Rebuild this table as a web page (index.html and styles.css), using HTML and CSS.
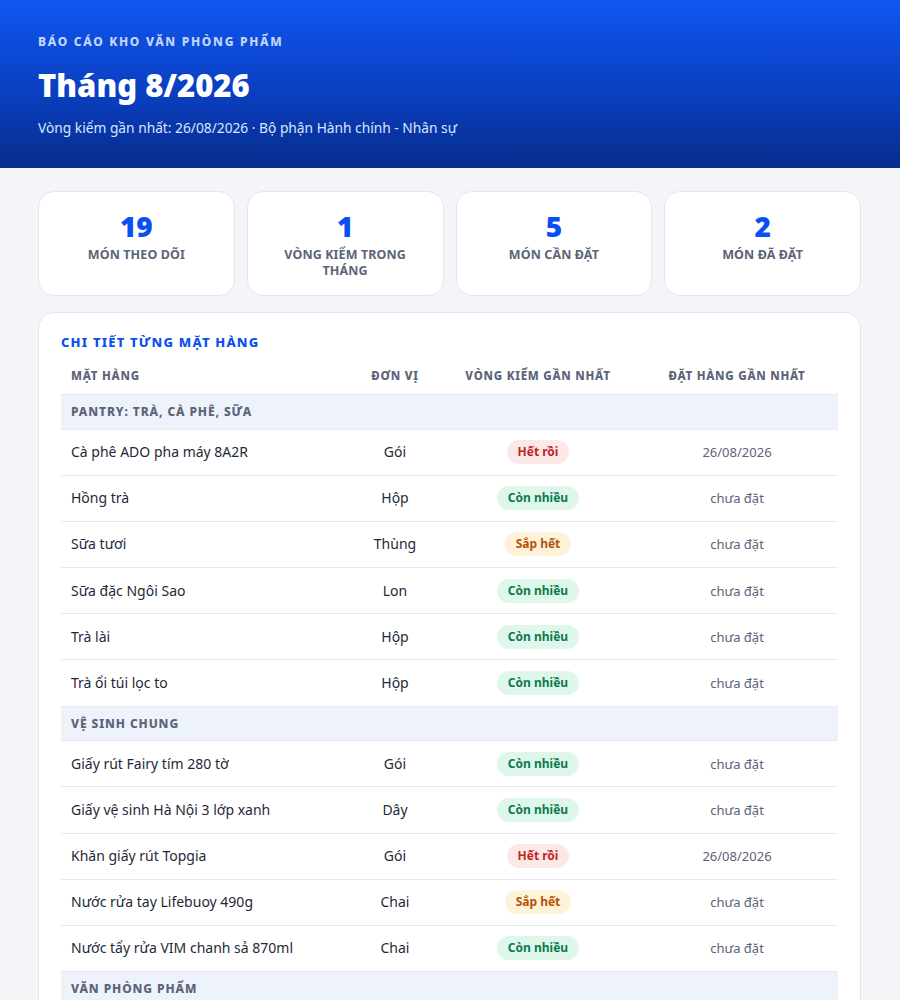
FILE: index.html
```html
<!DOCTYPE html>
<html lang="vi">
<head>
<meta charset="utf-8">
<title>Báo cáo kho văn phòng phẩm</title>
<link rel="stylesheet" href="styles.css">
</head>
<body>
<header class="hero">
  <div class="eyebrow">Báo cáo kho văn phòng phẩm</div>
  <h1 class="title">Tháng 8/2026</h1>
  <p class="subtitle">Vòng kiểm gần nhất: 26/08/2026 · Bộ phận Hành chính - Nhân sự</p>
</header>
<main class="content">
  <section class="stats">
    <div class="stat"><div class="stat-num">19</div><div class="stat-label">Món theo dõi</div></div>
    <div class="stat"><div class="stat-num">1</div><div class="stat-label">Vòng kiểm trong tháng</div></div>
    <div class="stat"><div class="stat-num">5</div><div class="stat-label">Món cần đặt</div></div>
    <div class="stat"><div class="stat-num">2</div><div class="stat-label">Món đã đặt</div></div>
  </section>
  <section class="panel">
    <h2 class="panel-title">Chi tiết từng mặt hàng</h2>
    <table class="items">
      <colgroup>
        <col class="c-name"><col class="c-unit"><col class="c-check"><col class="c-order">
      </colgroup>
      <thead>
        <tr><th class="left">Mặt hàng</th><th>Đơn vị</th><th>Vòng kiểm gần nhất</th><th>Đặt hàng gần nhất</th></tr>
      </thead>
      <tbody>
        <tr class="cat"><td colspan="4">Pantry: Trà, Cà phê, Sữa</td></tr>
        <tr><td class="name">Cà phê ADO pha máy 8A2R</td><td class="unit">Gói</td><td class="st"><span class="badge out">Hết rồi</span></td><td class="date">26/08/2026</td></tr>
        <tr><td class="name">Hồng trà</td><td class="unit">Hộp</td><td class="st"><span class="badge ok">Còn nhiều</span></td><td class="date">chưa đặt</td></tr>
        <tr><td class="name">Sữa tươi</td><td class="unit">Thùng</td><td class="st"><span class="badge low">Sắp hết</span></td><td class="date">chưa đặt</td></tr>
        <tr><td class="name">Sữa đặc Ngôi Sao</td><td class="unit">Lon</td><td class="st"><span class="badge ok">Còn nhiều</span></td><td class="date">chưa đặt</td></tr>
        <tr><td class="name">Trà lài</td><td class="unit">Hộp</td><td class="st"><span class="badge ok">Còn nhiều</span></td><td class="date">chưa đặt</td></tr>
        <tr><td class="name">Trà ổi túi lọc to</td><td class="unit">Hộp</td><td class="st"><span class="badge ok">Còn nhiều</span></td><td class="date">chưa đặt</td></tr>
        <tr class="cat"><td colspan="4">Vệ sinh chung</td></tr>
        <tr><td class="name">Giấy rút Fairy tím 280 tờ</td><td class="unit">Gói</td><td class="st"><span class="badge ok">Còn nhiều</span></td><td class="date">chưa đặt</td></tr>
        <tr><td class="name">Giấy vệ sinh Hà Nội 3 lớp xanh</td><td class="unit">Dây</td><td class="st"><span class="badge ok">Còn nhiều</span></td><td class="date">chưa đặt</td></tr>
        <tr><td class="name">Khăn giấy rút Topgia</td><td class="unit">Gói</td><td class="st"><span class="badge out">Hết rồi</span></td><td class="date">26/08/2026</td></tr>
        <tr><td class="name">Nước rửa tay Lifebuoy 490g</td><td class="unit">Chai</td><td class="st"><span class="badge low">Sắp hết</span></td><td class="date">chưa đặt</td></tr>
        <tr><td class="name">Nước tẩy rửa VIM chanh sả 870ml</td><td class="unit">Chai</td><td class="st"><span class="badge ok">Còn nhiều</span></td><td class="date">chưa đặt</td></tr>
        <tr class="cat"><td colspan="4">Văn phòng phẩm</td></tr>
        <tr><td class="name">Bút bi Thiên Long</td><td class="unit">Hộp</td><td class="st"><span class="badge ok">Còn nhiều</span></td><td class="date">chưa đặt</td></tr>
        <tr><td class="name">Giấy A4 Double A</td><td class="unit">Ram</td><td class="st"><span class="badge low">Sắp hết</span></td><td class="date">chưa đặt</td></tr>
      </tbody>
    </table>
  </section>
</main>
</body>
</html>
```

FILE: styles.css
```css
* { box-sizing: border-box; }
html, body { margin: 0; padding: 0; }
body {
  font-family: "Noto Sans", "Open Sans", "DejaVu Sans", sans-serif;
  background: #f3f5f9;
  color: #1f2937;
}
.hero {
  background: linear-gradient(180deg, #0f57f1 0%, #0a3fc0 55%, #062d8c 100%);
  padding: 34px 38px 30px;
  height: 168px;
}
.eyebrow {
  font-size: 12px;
  line-height: 16px;
  font-weight: 800;
  letter-spacing: 1.7px;
  text-transform: uppercase;
  color: #c4d5ff;
}
.title {
  margin: 15px 0 0;
  font-size: 31px;
  line-height: 40px;
  font-weight: 900;
  color: #ffffff;
}
.subtitle {
  margin: 13px 0 0;
  font-size: 13.75px;
  line-height: 20px;
  color: #dbe6ff;
}
.content {
  padding: 23px 39px 40px 38px;
}
.stats {
  display: grid;
  grid-template-columns: repeat(4, 1fr);
  gap: 12px;
}
.stat {
  background: #fff;
  border: 1px solid #e2e7ef;
  border-radius: 16px;
  padding: 17px 30px 16px;
  text-align: center;
}
.stat-num {
  font-size: 28px;
  line-height: 34px;
  font-weight: 900;
  color: #0a4ff2;
}
.stat-label {
  margin-top: 4px;
  font-size: 12.5px;
  line-height: 16px;
  font-weight: 700;
  text-transform: uppercase;
  letter-spacing: 0.1px;
  color: #5b6478;
}
.panel {
  margin-top: 16px;
  background: #fff;
  border: 1px solid #e2e7ef;
  border-radius: 16px;
  padding: 20px 22px 22px;
}
.panel-title {
  margin: 0 0 6px;
  font-size: 13px;
  line-height: 18px;
  font-weight: 800;
  letter-spacing: 1.2px;
  text-transform: uppercase;
  color: #0a4ff2;
}
.items {
  width: 100%;
  border-collapse: separate;
  border-spacing: 0;
  table-layout: fixed;
}
.c-name { width: 289px; }
.c-unit { width: 90px; }
.c-check { width: 196px; }
.c-order { width: 202px; }
.items th {
  padding: 11px 10px 10px;
  font-size: 11.5px;
  line-height: 16px;
  font-weight: 800;
  letter-spacing: 0.75px;
  text-transform: uppercase;
  color: #5b6478;
  text-align: center;
  border-bottom: 1px solid #e2e7ef;
}
.items th.left { text-align: left; }
.items td {
  padding: 0 10px;
  height: 46.2px;
  font-size: 14px;
  line-height: 20px;
  border-bottom: 1px solid #e5e9f0;
  vertical-align: middle;
}
.items tr.cat td {
  background: #eef3fb;
  height: 34.5px;
  padding: 0 10px;
  font-size: 12px;
  line-height: 17px;
  font-weight: 800;
  letter-spacing: 0.9px;
  text-transform: uppercase;
  color: #5b6478;
}
.items td.unit, .items td.st, .items td.date { text-align: center; }
.items td.date { font-size: 13px; color: #5b6478; }
.badge {
  display: inline-block;
  vertical-align: middle;
  padding: 4px 11px;
  border-radius: 999px;
  font-size: 12px;
  line-height: 16px;
  font-weight: 700;
}
.badge.out { background: #fde8e8; color: #c02424; }
.badge.ok { background: #dff7eb; color: #0d7a4c; }
.badge.low { background: #fef2d9; color: #b45309; }
```
